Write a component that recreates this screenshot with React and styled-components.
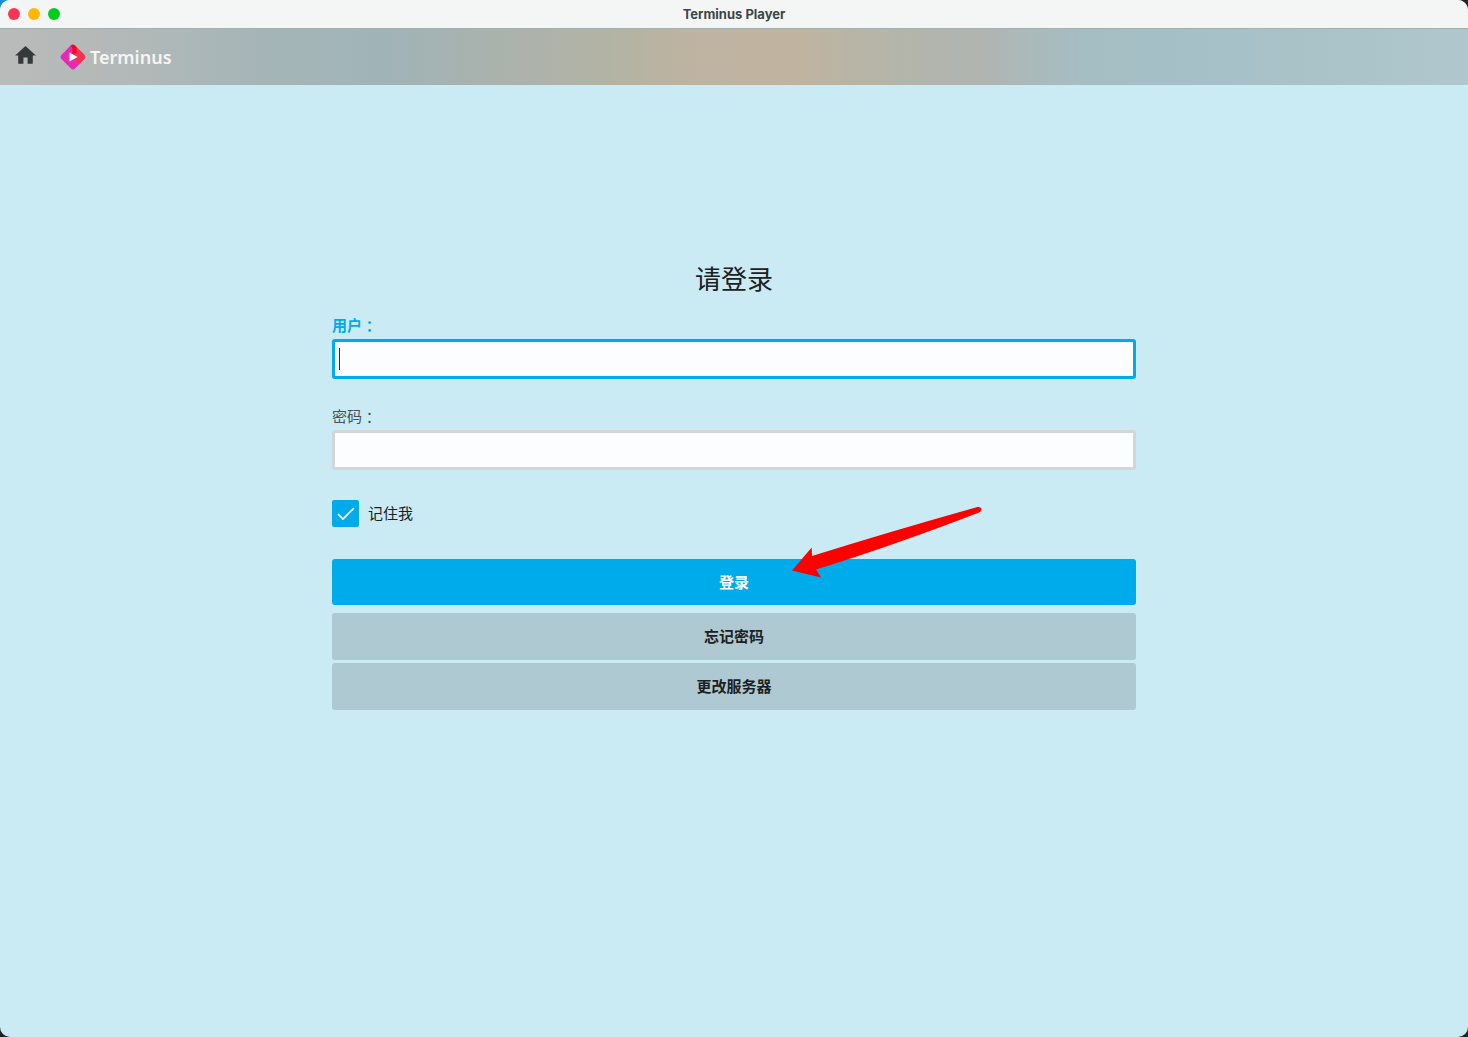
import React, { useState } from 'react';
import styled, { createGlobalStyle } from 'styled-components';

const GlobalStyles = createGlobalStyle`
  * {
    box-sizing: border-box;
  }
  body {
    margin: 0;
    background: radial-gradient(circle at 0 0, #1b8fd0 0, #1b8fd0 8px, #1d2426 16px);
    background-color: #1d2426;
    font-family: 'Liberation Sans', 'Noto Sans CJK SC', sans-serif;
  }
`;

const WindowStyles = styled.div`
  display: flex;
  flex-direction: column;
  min-height: 100vh;
  border-radius: 10px;
  overflow: hidden;
  background-color: #caebf4;
`;

const TitleBar = styled.div`
  display: grid;
  grid-template-columns: 1fr auto 1fr;
  align-items: center;
  height: 28px;
  padding: 0 8px;
  background-color: #f4f6f6;
  .title {
    font-family: Inter, sans-serif;
    font-size: 13px;
    font-weight: 700;
    line-height: 16px;
    color: #3c4549;
  }
`;

const WindowButtons = styled.div`
  display: flex;
  gap: 8px;
`;

const WindowButton = styled.button`
  width: 12px;
  height: 12px;
  padding: 0;
  border: 0;
  border-radius: 50%;
  background-color: ${({ $color }) => $color};
`;

const HeaderStyles = styled.header`
  display: flex;
  align-items: center;
  gap: 22px;
  height: 57px;
  padding: 0 13px;
  border-top: 1px solid #a3b0b0;
  background: linear-gradient(
    90deg,
    #bababa 0%,
    #b3b9b8 8%,
    #a5b5b7 18%,
    #a0b4b8 26%,
    #a9b2ae 33%,
    #b2b3a5 41%,
    #beb3a1 47%,
    #c0b3a0 54%,
    #b6b5a7 59%,
    #b0b5b2 67%,
    #a4bec4 74%,
    #a5c0c6 82%,
    #afc7cd 100%
  );
`;

const HomeButton = styled.button`
  display: flex;
  padding: 0 0 2px;
  border: 0;
  background: none;
  color: #34393c;
`;

const Logo = styled.a`
  display: flex;
  align-items: center;
  gap: 4px;
  font-family: 'Noto Sans', sans-serif;
  font-size: 18px;
  font-weight: 600;
  line-height: 24px;
  color: #f5f5f5;
  text-decoration: none;
`;

const LoginForm = styled.form`
  display: flex;
  flex-direction: column;
  width: calc(100% - 32px);
  max-width: 804px;
  margin: 0 auto;
  padding: 176px 0 32px;
`;

const Heading = styled.h1`
  margin: 0 0 17px;
  font-size: 26px;
  font-weight: 400;
  line-height: 38px;
  text-align: center;
  color: #1b2022;
`;

const Field = styled.div`
  display: flex;
  flex-direction: column;
  margin-bottom: 28px;
  label {
    display: flex;
    height: 20px;
    margin-bottom: 3px;
    font-size: 15px;
    font-weight: 400;
    line-height: 20px;
    color: #465255;
  }
  .colon {
    font-family: 'Noto Sans CJK TC', sans-serif;
  }
  input {
    width: 100%;
    height: 40px;
    padding: 0 4px;
    border: 3px solid #d3d5d7;
    border-radius: 3px;
    outline: none;
    background-color: #fcfdff;
    font-family: inherit;
    font-size: 15px;
    color: #1b2022;
  }
  &.active {
    label {
      font-weight: 700;
      color: #00abeb;
    }
    input {
      border-color: #00abeb;
      caret-color: transparent;
      background-image: linear-gradient(#2c3234, #2c3234);
      background-repeat: no-repeat;
      background-position: 4px center;
      background-size: 1px 22px;
    }
  }
`;

const Remember = styled.label`
  display: flex;
  align-items: center;
  gap: 9px;
  height: 27px;
  margin: 2px 0 32px;
  font-size: 15px;
  line-height: 28px;
  color: #1b2022;
  .box {
    display: grid;
    width: 27px;
    height: 27px;
  }
  input,
  svg {
    grid-area: 1 / 1;
  }
  input {
    appearance: none;
    width: 27px;
    height: 27px;
    margin: 0;
    border: 3px solid #d3d5d7;
    border-radius: 2px;
    background-color: #fcfdff;
  }
  input:checked {
    border-color: #00abeb;
    background-color: #00abeb;
  }
  svg {
    pointer-events: none;
  }
`;

const Button = styled.button`
  height: 47px;
  margin-bottom: 3px;
  padding: 1px 0 0;
  border: 0;
  border-radius: 3px;
  background-color: #aec9d1;
  font-family: inherit;
  font-size: 15px;
  font-weight: 700;
  line-height: 20px;
  color: #1b2022;
  &.submit {
    height: 46px;
    margin-bottom: 8px;
    background-color: #00abeb;
    color: #fff;
  }
`;

// sits over the form and points at the login button
const Arrow = styled.svg`
  position: absolute;
  left: calc(50% + 58px);
  top: 505px;
  pointer-events: none;
`;

export default function App() {
  const [remember, setRemember] = useState(true);

  return (
    <>
      <GlobalStyles />
      <WindowStyles>
        <TitleBar>
          <WindowButtons>
            <WindowButton type="button" aria-label="Close" $color="#fc3652" />
            <WindowButton type="button" aria-label="Minimize" $color="#ffb50a" />
            <WindowButton type="button" aria-label="Zoom" $color="#00cd1c" />
          </WindowButtons>
          <span className="title">Terminus Player</span>
        </TitleBar>
        <HeaderStyles>
          <HomeButton type="button" aria-label="Home">
            <svg width="25" height="25" viewBox="0 0 24 24" fill="currentColor">
              <path d="M10 19v-6h4v6h5v-8h3L12 2 2 11h3v8z" />
            </svg>
          </HomeButton>
          <Logo href="#">
            <svg width="26" height="26" viewBox="0 0 26 26">
              <path
                d="M10.6 1.6a3.2 3.2 0 0 1 4.6 0l9 9a3.2 3.2 0 0 1 0 4.6l-5.2 5.2L13 13z"
                fill="#fb3150"
              />
              <path
                d="M10.6 1.6L1.7 10.7a3.2 3.2 0 0 0 0 4.6l9 9a3.2 3.2 0 0 0 4.6 0L19.6 20 13 13V5z"
                fill="#e42bb5"
              />
              <path
                d="M10.6 1.6Q11.7 .7 13 .7L15.5 2 16.5 3.5V9.5L12.5 10V4z"
                fill="#fb0010"
              />
              <path d="M9.5 8.5v9l8-4.5z" fill="#fff" />
            </svg>
            Terminus
          </Logo>
        </HeaderStyles>
        <LoginForm onSubmit={(e) => e.preventDefault()}>
          <Heading>请登录</Heading>
          <Field className="active">
            <label htmlFor="user">
              用户<span className="colon">：</span>
            </label>
            <input id="user" type="text" />
          </Field>
          <Field>
            <label htmlFor="password">
              密码<span className="colon">：</span>
            </label>
            <input id="password" type="password" />
          </Field>
          <Remember>
            <span className="box">
              <input
                type="checkbox"
                checked={remember}
                onChange={(e) => setRemember(e.target.checked)}
              />
              {remember && (
                <svg width="27" height="27" viewBox="0 0 27 27" fill="none">
                  <path d="M6 14l5 5L22 8" stroke="#fff" strokeWidth="1.7" />
                </svg>
              )}
            </span>
            记住我
          </Remember>
          <Button type="submit" className="submit">
            登录
          </Button>
          <Button type="button">忘记密码</Button>
          <Button type="button">更改服务器</Button>
        </LoginForm>
      </WindowStyles>
      <Arrow width="190" height="74" viewBox="0 0 190 74">
        <path
          d="M0 65.5L19.7 42.5L20 51Q100 26 185.5 2Q189 1.5 189.5 4Q189.7 6.5 187 7.5Q100 41 24 64.5L29 72.5Z"
          fill="#fe0000"
        />
      </Arrow>
    </>
  );
}
